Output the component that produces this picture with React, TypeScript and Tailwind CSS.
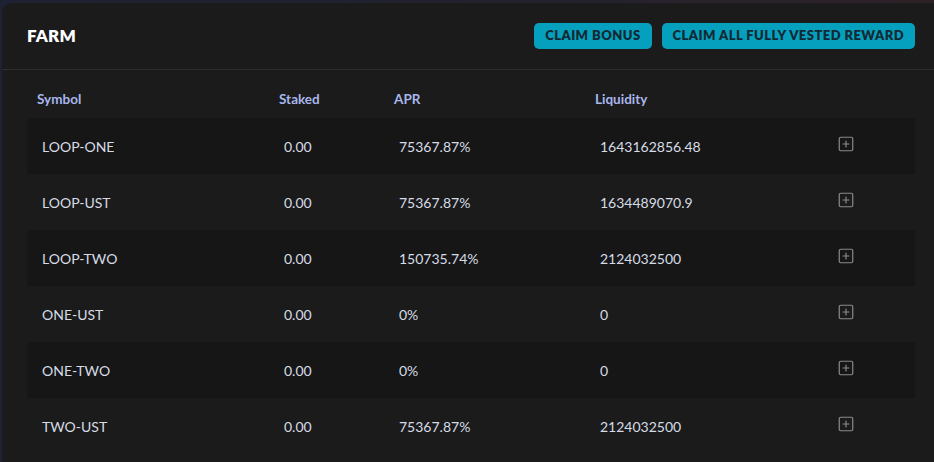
import React from 'react';
import { SquarePlus } from 'lucide-react';

interface FarmRow {
  symbol: string;
  staked: string;
  apr: string;
  liquidity: string;
}

const rows: FarmRow[] = [
  { symbol: 'LOOP-ONE', staked: '0.00', apr: '75367.87%', liquidity: '1643162856.48' },
  { symbol: 'LOOP-UST', staked: '0.00', apr: '75367.87%', liquidity: '1634489070.9' },
  { symbol: 'LOOP-TWO', staked: '0.00', apr: '150735.74%', liquidity: '2124032500' },
  { symbol: 'ONE-UST', staked: '0.00', apr: '0%', liquidity: '0' },
  { symbol: 'ONE-TWO', staked: '0.00', apr: '0%', liquidity: '0' },
  { symbol: 'TWO-UST', staked: '0.00', apr: '75367.87%', liquidity: '2124032500' },
];

const cols = 'grid grid-cols-[242px_115px_201px_251px_1fr]';

export default function App() {
  return (
    <div
      className="h-[462px] w-[934px] overflow-hidden bg-gradient-to-r from-[#1e2132] via-[#22222e] to-[#2e2228] pl-[2px] pt-[3px]"
      style={{ fontFamily: 'Lato, "Noto Sans", sans-serif' }}
    >
      <div className="h-full w-[960px] rounded-tl-[10px] bg-[#1b1b1b]">
        <div className="flex h-[67px] items-center border-b border-[#2e2e2e] pl-[25px] pr-[47px]">
          <h1 className="text-[17px] font-extrabold tracking-[0.2px] text-white">FARM</h1>
          <div className="ml-auto flex gap-[10px]">
            <button className="h-[26px] rounded-[5px] bg-[#06a0bf] px-[11px] text-[13px] font-extrabold tracking-[0.45px] text-[#122a33]">
              CLAIM BONUS
            </button>
            <button className="h-[26px] rounded-[5px] bg-[#06a0bf] px-[11px] text-[13px] font-extrabold tracking-[0.45px] text-[#122a33]">
              CLAIM ALL FULLY VESTED REWARD
            </button>
          </div>
        </div>

        <div className="pl-[25px] pt-[10px]">
          <div className={`${cols} h-[38px] w-[888px] items-center text-[13.5px] font-bold text-[#a8b6ec]`}>
            <div className="pl-[10px]">Symbol</div>
            <div className="pl-[10px]">Staked</div>
            <div className="pl-[10px]">APR</div>
            <div className="pl-[10px]">Liquidity</div>
            <div />
          </div>
          {rows.map((r, i) => (
            <div
              key={r.symbol}
              className={`${cols} h-[56px] w-[888px] items-center text-[14px] text-[#d6dce6] ${i % 2 === 0 ? 'bg-[#161616]' : ''}`}
            >
              <div className="pl-[15px]">{r.symbol}</div>
              <div className="pl-[15px]">{r.staked}</div>
              <div className="pl-[15px]">{r.apr}</div>
              <div className="pl-[15px]">{r.liquidity}</div>
              <div className="pl-[1px] pb-[4px]">
                <SquarePlus className="h-[18px] w-[18px] text-[#8a8a8a]" strokeWidth={1.6} />
              </div>
            </div>
          ))}
        </div>
      </div>
    </div>
  );
}
